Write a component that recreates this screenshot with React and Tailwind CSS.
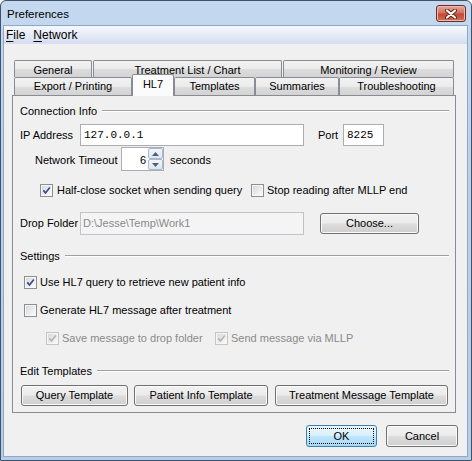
import React from 'react';

const Check = ({ checked, disabled }) => (
  <span
    className={`flex items-center justify-center w-[13px] h-[13px] shrink-0 border ${
      disabled ? 'border-[#c5c5c5]' : 'border-[#8e8f8f]'
    } bg-[linear-gradient(135deg,#d3d6dc_0%,#eeeeee_60%,#ffffff_100%)] shadow-[inset_0_0_0_1px_#f6f6f6]`}
  >
    {checked && (
      <svg width="9" height="9" viewBox="0 0 9 9">
        <path
          d="M1.3 4.4 L3.5 6.9 L7.8 1.4"
          fill="none"
          stroke={disabled ? '#b5b5b5' : '#3c4d8c'}
          strokeWidth="1.7"
        />
      </svg>
    )}
  </span>
);

const Button = ({ children, className = '' }) => (
  <div
    className={`flex items-center justify-center h-[21px] rounded-[3px] border border-[#707070] bg-[linear-gradient(to_bottom,#f2f2f2_0%,#ebebeb_48%,#dddddd_52%,#cfcfcf_100%)] shadow-[inset_0_0_0_1px_#fbfbfb] ${className}`}
  >
    {children}
  </div>
);

const Tab = ({ children, className = '' }) => (
  <div
    className={`flex items-center justify-center border-l border-t border-r border-[#898c95] rounded-t-[2px] bg-[linear-gradient(to_bottom,#f2f2f2_0%,#ebebeb_50%,#dddddd_50%,#d3d3d3_100%)] ${className}`}
  >
    {children}
  </div>
);

const Section = ({ title, className = '' }) => (
  <div className={`h-[14px] flex items-center gap-[5px] ${className}`}>
    <span>{title}</span>
    <div className="flex-1 h-[2px] border-t border-[#a0a0a0] border-b border-b-white" />
  </div>
);

const TextField = ({ children, className = '' }) => (
  <div className={`h-[22px] border border-[#abadb3] bg-white flex items-center pl-[3px] font-['Liberation_Mono',monospace] text-[11px] ${className}`}>
    {children}
  </div>
);

const App = () => {
  return (
    <div className="w-[472px] h-[461px] font-['Liberation_Sans',Arial,sans-serif] text-[11px] text-black leading-[13px] select-none">
      <div className="w-full h-full flex flex-col border border-[#3f5268] rounded-t-[6px] bg-[linear-gradient(to_bottom,#c4d9ef_0%,#b9d0ea_40%,#b5cde8_100%)]">
        {/* title bar */}
        <div className="h-[24px] flex items-start justify-between pl-[6px] pr-[5px]">
          <span className="text-[11.5px] mt-[7px]">Preferences</span>
          <div className="mt-[4px] w-[30px] h-[17px] rounded-[3px] border border-[#6d2c23] bg-[linear-gradient(to_bottom,#e7a79c_0%,#d2715f_45%,#c24a35_55%,#d0705b_100%)] flex items-center justify-center shadow-[inset_0_0_0_1px_#f0b9ad]">
            <svg width="14" height="10" viewBox="0 0 14 10">
              <path d="M3 1.5 L11 8.5 M11 1.5 L3 8.5" stroke="#5a2118" strokeWidth="4" strokeLinecap="round" />
              <path d="M3 1.5 L11 8.5 M11 1.5 L3 8.5" stroke="#ffffff" strokeWidth="2.2" strokeLinecap="round" />
            </svg>
          </div>
        </div>

        {/* client */}
        <div className="flex-1 flex flex-col ml-[2px] mr-[3px] mb-[3px] border border-[#8ea9c8] bg-[#f0f0f0]">
          {/* menu bar */}
          <div className="h-[18px] flex items-center pl-[2px] text-[12px] bg-[linear-gradient(to_bottom,#f6f8fc_0%,#e6ebf6_50%,#d5dcef_100%)]">
            <span>
              <span className="underline underline-offset-[2px]">F</span>ile
            </span>
            <span className="ml-[8px]">
              <span className="underline underline-offset-[2px]">N</span>etwork
            </span>
          </div>

          {/* body */}
          <div className="flex flex-col pl-[8px] pt-[16px]">
            {/* tab row 1 */}
            <div className="flex h-[17px] ml-[2px]">
              <Tab className="w-[78px] pt-[2px]">General</Tab>
              <Tab className="w-[189px] ml-[1px] pt-[2px]">Treatment List / Chart</Tab>
              <Tab className="w-[171px] ml-[1px] pt-[2px]">Monitoring / Review</Tab>
            </div>
            {/* tab row 2 */}
            <div className="flex items-end h-[18px] ml-[2px]">
              <Tab className="w-[118px] h-[18px]">Export / Printing</Tab>
              <div className="relative z-10 w-[42px] h-[22px] -mb-px pb-[3px] flex items-center justify-center border-l border-t border-r border-[#898c95] rounded-t-[2px] bg-[#fbfbfb]">
                HL7
              </div>
              <Tab className="w-[81px] h-[18px]">Templates</Tab>
              <Tab className="w-[84px] h-[18px]">Summaries</Tab>
              <Tab className="w-[115px] h-[18px]">Troubleshooting</Tab>
            </div>

            {/* panel */}
            <div className="w-[444px] border border-[#898c95] bg-[#f0f0f0] flex flex-col pl-[7px] pr-[6px] pb-[6px]">
              <Section title="Connection Info" className="mt-[8px]" />

              <div className="h-[22px] mt-[6px] flex items-center">
                <span className="w-[60px]">IP Address</span>
                <TextField className="w-[224px]">127.0.0.1</TextField>
                <span className="ml-[14px] w-[25px]">Port</span>
                <TextField className="w-[41px]">8225</TextField>
              </div>

              <div className="h-[24px] mt-[1px] flex items-center">
                <span className="ml-[15px] w-[86px] pt-[2px]">Network Timeout</span>
                <div className="w-[43px] h-[24px] border border-[#abadb3] bg-white flex items-center">
                  <span className="flex-1 text-right pr-[2px] pt-[2px]">6</span>
                  <div className="w-[15px] h-[22px] flex flex-col">
                    <div className="flex-1 border border-[#a9b8cb] rounded-[2px] bg-[linear-gradient(to_bottom,#f3f6fa,#dde6f0)] flex items-center justify-center">
                      <svg width="7" height="4" viewBox="0 0 7 4">
                        <path d="M0 4 L3.5 0 L7 4 Z" fill="#4c5f80" />
                      </svg>
                    </div>
                    <div className="flex-1 border border-[#a9b8cb] rounded-[2px] bg-[linear-gradient(to_bottom,#f3f6fa,#dde6f0)] flex items-center justify-center">
                      <svg width="7" height="4" viewBox="0 0 7 4">
                        <path d="M0 0 L7 0 L3.5 4 Z" fill="#4c5f80" />
                      </svg>
                    </div>
                  </div>
                </div>
                <span className="ml-[6px] pt-[2px]">seconds</span>
              </div>

              <div className="h-[14px] mt-[12px] flex items-center">
                <div className="ml-[20px] w-[211px] flex items-center gap-[4px]">
                  <Check checked />
                  <span>Half-close socket when sending query</span>
                </div>
                <div className="flex items-center gap-[3px]">
                  <Check />
                  <span>Stop reading after MLLP end</span>
                </div>
              </div>

              <div className="h-[23px] mt-[15px] flex items-center">
                <span className="w-[60px]">Drop Folder</span>
                <div className="w-[224px] h-[23px] border border-[#bfc2c8] bg-[#f4f4f4] flex items-center pl-[2px] text-[#8a8a8a]">
                  D:\Jesse\Temp\Work1
                </div>
                <Button className="ml-[16px] w-[99px]">Choose...</Button>
              </div>

              <Section title="Settings" className="mt-[14px]" />

              <div className="h-[14px] mt-[12px] flex items-center gap-[3px] ml-[4px]">
                <Check checked />
                <span>Use HL7 query to retrieve new patient info</span>
              </div>

              <div className="h-[14px] mt-[14px] flex items-center gap-[3px] ml-[4px]">
                <Check />
                <span>Generate HL7 message after treatment</span>
              </div>

              <div className="h-[14px] mt-[14px] flex items-center text-[#8a8a8a]">
                <div className="ml-[26px] w-[169px] flex items-center gap-[3px]">
                  <Check checked disabled />
                  <span>Save message to drop folder</span>
                </div>
                <div className="flex items-center gap-[3px]">
                  <Check checked disabled />
                  <span>Send message via MLLP</span>
                </div>
              </div>

              <Section title="Edit Templates" className="mt-[19px]" />

              <div className="h-[21px] mt-[7px] flex items-center">
                <Button className="ml-[1px] w-[107px]">Query Template</Button>
                <Button className="ml-[6px] w-[134px]">Patient Info Template</Button>
                <Button className="ml-[7px] w-[173px]">Treatment Message Template</Button>
              </div>
            </div>

            {/* dialog buttons */}
            <div className="w-[446px] flex justify-end mt-[12px]">
              <div className="w-[71px] h-[22px] rounded-[3px] border border-[#3c7fb1] bg-[linear-gradient(to_bottom,#eaf6fd_0%,#d9f0fc_48%,#bee6fd_52%,#a7d9f5_100%)] p-[2px]">
                <div className="w-full h-full border border-dotted border-black flex items-center justify-center">OK</div>
              </div>
              <Button className="ml-[9px] w-[72px] h-[22px]">Cancel</Button>
            </div>
          </div>
        </div>
      </div>
    </div>
  );
};

export default App;
